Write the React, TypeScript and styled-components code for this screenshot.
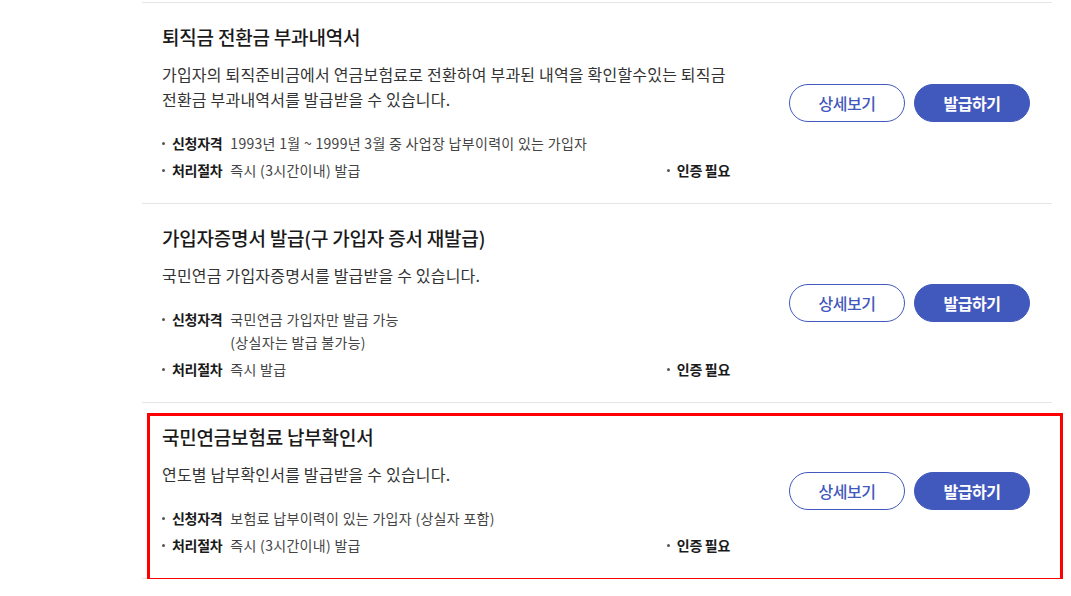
import { FC } from 'react'
import styled, { createGlobalStyle } from 'styled-components'

const colors = {
  blue: '#4159bd',
  line: '#e6e6e6',
  title: '#1a1a1a',
  text: '#333333',
  value: '#444444',
  highlight: '#ff0000',
}

interface Meta {
  label: string
  value: string[]
}

interface Doc {
  title: string
  desc: string[]
  eligibility: string[]
  process: string
  highlighted?: boolean
}

const docs: Doc[] = [
  {
    title: '퇴직금 전환금 부과내역서',
    desc: [
      '가입자의 퇴직준비금에서 연금보험료로 전환하여 부과된 내역을 확인할수있는 퇴직금',
      '전환금 부과내역서를 발급받을 수 있습니다.',
    ],
    eligibility: ['1993년 1월 ~ 1999년 3월 중 사업장 납부이력이 있는 가입자'],
    process: '즉시 (3시간이내) 발급',
  },
  {
    title: '가입자증명서 발급(구 가입자 증서 재발급)',
    desc: ['국민연금 가입자증명서를 발급받을 수 있습니다.'],
    eligibility: ['국민연금 가입자만 발급 가능', '(상실자는 발급 불가능)'],
    process: '즉시 발급',
  },
  {
    title: '국민연금보험료 납부확인서',
    desc: ['연도별 납부확인서를 발급받을 수 있습니다.'],
    eligibility: ['보험료 납부이력이 있는 가입자 (상실자 포함)'],
    process: '즉시 (3시간이내) 발급',
    highlighted: true,
  },
]

const MetaRow: FC<{ item: Meta }> = ({ item }) => (
  <Bullet>
    <Label>{item.label}</Label>
    <Value>
      {item.value.map((line, i) => (
        <span key={line}>
          {i > 0 && <br />}
          {line}
        </span>
      ))}
    </Value>
  </Bullet>
)

const App: FC = () => {
  return (
    <>
      <GlobalStyle />
      <Page>
        <List>
          {docs.map((doc) => (
            <Item key={doc.title}>
              <Info>
                <Title>{doc.title}</Title>
                <Desc>
                  {doc.desc.map((line, i) => (
                    <span key={line}>
                      {i > 0 && <br />}
                      {line}
                    </span>
                  ))}
                </Desc>
                <MetaList>
                  <MetaRow item={{ label: '신청자격', value: doc.eligibility }} />
                  <MetaLine>
                    <MetaRow item={{ label: '처리절차', value: [doc.process] }} />
                    <Bullet>
                      <Label>인증 필요</Label>
                    </Bullet>
                  </MetaLine>
                </MetaList>
              </Info>
              <Buttons>
                <Button>상세보기</Button>
                <Button primary>발급하기</Button>
              </Buttons>
              {doc.highlighted && <Highlight />}
            </Item>
          ))}
        </List>
      </Page>
    </>
  )
}

const GlobalStyle = createGlobalStyle`
  html, body {
    margin: 0;
    padding: 0;
    background: #ffffff;
  }
  body {
    font-family: 'Noto Sans CJK KR', 'Noto Sans', sans-serif;
    color: ${colors.text};
  }
  * {
    box-sizing: border-box;
  }
`

const Page = styled.div`
  padding: 2px 0 0 142px;
`

const List = styled.ul`
  width: 910px;
  margin: 0;
  padding: 0;
  list-style: none;
`

const Item = styled.li`
  position: relative;
  display: flex;
  align-items: center;
  justify-content: space-between;
  padding: 21px 22px 21px 20px;
  border-top: 1px solid ${colors.line};

  &:last-child {
    border-bottom: 1px solid ${colors.line};
  }
`

const Info = styled.div`
  display: flex;
  flex-direction: column;
  width: 568px;
`

const Title = styled.h3`
  margin: 0;
  font-size: 19px;
  line-height: 26px;
  font-weight: 500;
  letter-spacing: -0.2px;
  color: ${colors.title};
`

const Desc = styled.p`
  margin: 12px 0 0;
  font-size: 16px;
  line-height: 25px;
  letter-spacing: 0.2px;
  color: ${colors.text};
  white-space: nowrap;
`

const MetaList = styled.div`
  display: flex;
  flex-direction: column;
  gap: 4px;
  margin-top: 20px;
`

const MetaLine = styled.div`
  display: flex;
  justify-content: space-between;
`

const Bullet = styled.div`
  position: relative;
  display: flex;
  gap: 8px;
  padding-left: 10px;
  font-size: 14px;
  line-height: 23px;

  &::before {
    content: '';
    position: absolute;
    left: 0;
    top: 10px;
    width: 3px;
    height: 3px;
    border-radius: 50%;
    background: #555555;
  }
`

const Label = styled.span`
  font-weight: 700;
  letter-spacing: -0.3px;
  color: ${colors.title};
`

const Value = styled.span`
  letter-spacing: 0.3px;
  color: ${colors.value};
`

const Buttons = styled.div`
  display: flex;
  gap: 9px;
`

const Button = styled.button<{ primary?: boolean }>`
  width: 116px;
  height: 38px;
  border-radius: 19px;
  border: 1px solid ${colors.blue};
  background: ${(p) => (p.primary ? colors.blue : '#ffffff')};
  color: ${(p) => (p.primary ? '#ffffff' : colors.blue)};
  font-family: 'Noto Sans CJK KR', 'Noto Sans', sans-serif;
  font-size: 16px;
  font-weight: ${(p) => (p.primary ? 700 : 500)};
  letter-spacing: -0.5px;
  cursor: pointer;
`

const Highlight = styled.div`
  position: absolute;
  top: 10px;
  left: 5px;
  right: -11px;
  bottom: -3px;
  border: 3px solid ${colors.highlight};
  pointer-events: none;
`

export default App
